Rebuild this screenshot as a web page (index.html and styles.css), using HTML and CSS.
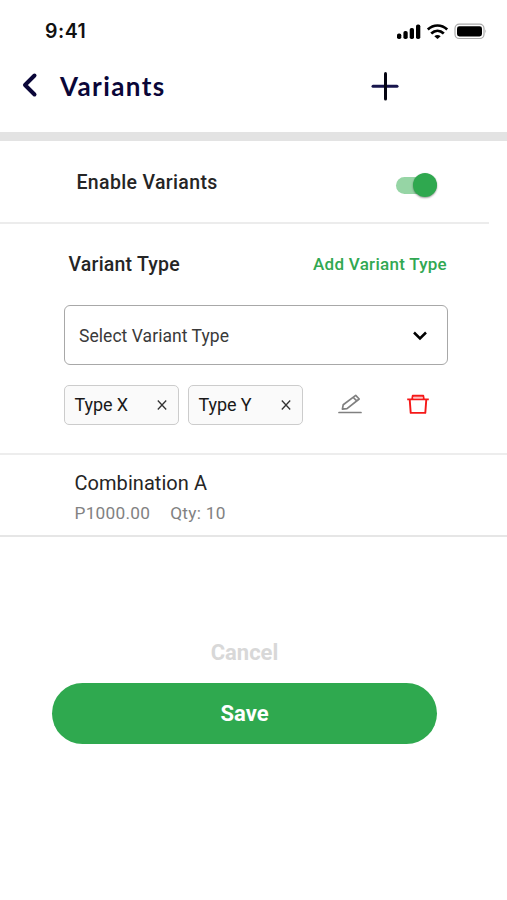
FILE: index.html
```html
<!DOCTYPE html>
<html lang="en">
<head>
<meta charset="utf-8">
<meta name="viewport" content="width=device-width, initial-scale=1">
<title>Variants</title>
<link rel="stylesheet" href="styles.css">
</head>
<body>
<div class="status-bar">
  <span class="time">9:41</span>
  <svg class="status-icons" width="91" height="18" viewBox="0 0 91 18" aria-hidden="true">
    <rect x="1" y="11.500" width="4.300" height="5.500" rx="1.800"/>
    <rect x="7.400" y="9" width="4.300" height="8" rx="1.800"/>
    <rect x="13.700" y="6" width="4.300" height="11" rx="1.800"/>
    <rect x="20" y="2.500" width="4.300" height="14.500" rx="1.800"/>
    <g fill="none" stroke="#000" stroke-width="2.700">
      <path d="M31.800 7.400C37.500 2.200 45.500 2.200 51.200 7.400"/>
      <path d="M35.200 11.500C39 7.900 44 7.900 47.800 11.500"/>
    </g>
    <path d="M38.300 14.200Q41.500 11.700 44.700 14.200L41.500 17Z"/>
    <rect x="59" y="2.200" width="29" height="14.300" rx="4.300" fill="#fff" stroke="#aaa" stroke-width="1.200"/>
    <rect x="61" y="4.200" width="25" height="10.300" rx="2.400"/>
    <path d="M89.500 7.200q1.500 2.100 0 4.200z" fill="#999"/>
  </svg>
</div>
<header class="header">
  <svg class="back" width="18" height="26" viewBox="0 0 18 26" aria-label="Back">
    <path d="M14.500 3.500L5 13l9.500 9.500" fill="none" stroke="#0a0638" stroke-width="4" stroke-linecap="round" stroke-linejoin="round"/>
  </svg>
  <h1 class="title">Variants</h1>
  <svg class="plus" width="30" height="30" viewBox="0 0 30 30" aria-label="Add">
    <path d="M3 15.200h24" stroke="#17154c" stroke-width="3" stroke-linecap="round"/>
    <path d="M15.500 2.500v25.500" stroke="#050512" stroke-width="3" stroke-linecap="round"/>
  </svg>
</header>
<main>
  <section class="enable">
    <span class="enable-label">Enable Variants</span>
    <span class="switch"><span class="knob"></span></span>
  </section>
  <section class="types">
    <div class="type-head">
      <span class="type-title">Variant Type</span>
      <span class="add">Add Variant Type</span>
    </div>
    <div class="select">
      <span class="select-label">Select Variant Type</span>
      <svg width="18" height="12" viewBox="0 0 18 12" aria-hidden="true"><path d="M3 3.500l6 6 6-6" fill="none" stroke="#000" stroke-width="2.500"/></svg>
    </div>
    <div class="chips">
      <div class="chip"><span>Type X</span><svg width="10" height="10" viewBox="0 0 10 10"><path d="M.8.500l8.400 9M9.200.500l-8.400 9"/></svg></div>
      <div class="chip"><span>Type Y</span><svg width="10" height="10" viewBox="0 0 10 10"><path d="M.8.500l8.400 9M9.200.500l-8.400 9"/></svg></div>
      <svg class="edit" width="24" height="22" viewBox="0 0 24 22" aria-label="Edit">
        <path d="M1 18.500h22M4.400 15.200l.8-4.400L17.700 1.400l3.500 3.600L9 14.700zM15.300 3.500l3.400 3.400" fill="none" stroke="#808080" stroke-width="1.700" stroke-linejoin="round" stroke-linecap="round"/>
      </svg>
      <svg class="trash" width="24" height="22" viewBox="0 0 24 22" aria-label="Delete">
        <path d="M1.200 5.400h21.600M3.700 5.400l1 13.500h14.600l1-13.500M6.200 5.200l.5-3.400h10.600l.5 3.400" fill="none" stroke="#f51818" stroke-width="1.900" stroke-linejoin="round"/>
        <path d="M7 3.700h10" stroke="#ffb0b0"/>
      </svg>
    </div>
  </section>
  <section class="combo">
    <div class="combo-name">Combination A</div>
    <div class="combo-meta"><span>P1000.00</span><span>Qty: 10</span></div>
  </section>
  <div class="actions">
    <button class="cancel">Cancel</button>
    <button class="save">Save</button>
  </div>
</main>
</body>
</html>
```
FILE: styles.css
```css
* { box-sizing: border-box; }
body {
  margin: 0;
  width: 507px;
  height: 900px;
  overflow: hidden;
  background: #fff;
  color: #252525;
  font-family: Roboto, sans-serif;
}
svg { display: block; flex: none; }
span, h1, .combo-name { white-space: nowrap; }
.status-bar {
  display: flex;
  justify-content: space-between;
  align-items: center;
  height: 62px;
  padding: 0 20px 0 45px;
}
.time { font: 600 19.5px/24px Inter, sans-serif; letter-spacing: .5px; color: #111; }
.header {
  display: flex;
  align-items: center;
  height: 79px;
  padding: 0 107px 30px 20px;
  border-bottom: 9px solid #e3e3e3;
}
.back { margin-top: 6px; }
.title {
  margin: 8px 0 0 22px;
  font: 700 26px/32px Lato, sans-serif;
  letter-spacing: 1.4px;
  color: #0a0638;
}
.plus { margin: 7px 0 0 auto; }
.enable {
  display: flex;
  justify-content: space-between;
  width: 489px;
  height: 83px;
  padding: 29px 52px 0 76.5px;
  border-bottom: 2px solid #ececec;
}
.enable-label { font-size: 19.5px; line-height: 26px; font-weight: 500; letter-spacing: .34px; }
.switch {
  display: flex;
  justify-content: flex-end;
  align-items: center;
  width: 41px;
  height: 17px;
  margin-top: 6.5px;
  border-radius: 9px;
  background: #96d5a5;
}
.knob {
  width: 24px;
  height: 24px;
  border-radius: 50%;
  background: #2fa84f;
  box-shadow: 0 1px 2px rgba(0, 0, 0, .4);
}
.types {
  height: 231px;
  padding: 28px 59px 0 64px;
  border-bottom: 2px solid #ededed;
}
.type-head {
  display: flex;
  justify-content: space-between;
  align-items: flex-start;
  height: 26px;
  padding: 0 1px 0 4.500px;
  line-height: 25px;
}
.type-title { font-size: 19.5px; font-weight: 500; letter-spacing: .2px; }
.add { font-size: 17px; font-weight: 500; letter-spacing: .27px; color: #31a852; }
.select {
  display: flex;
  justify-content: space-between;
  align-items: center;
  height: 60px;
  margin-top: 27px;
  padding: 0 18px 0 14px;
  border: 1.5px solid #a8a8a8;
  border-radius: 6px;
}
.select-label { padding-top: 2px; font-size: 17.5px; letter-spacing: .05px; color: #3a3a3a; }
.chips { display: flex; align-items: center; height: 40px; margin-top: 20px; }
.chip {
  display: flex;
  justify-content: space-between;
  align-items: center;
  width: 115px;
  height: 40px;
  margin-right: 9px;
  padding: 0 11.500px 0 9.500px;
  border: 1px solid #ccc;
  border-radius: 5px;
  background: #fafafa;
  font-size: 18px;
  letter-spacing: -.1px;
  color: #191919;
}
.chip span { padding-bottom: 2px; }
.chip path { fill: none; stroke: #333; stroke-width: 1.3; }
.edit { margin-left: 26px; }
.trash { margin-left: 44px; }
.combo {
  height: 82px;
  padding: 16px 0 0 74.5px;
  border-bottom: 2px solid #e6e6e6;
}
.combo-name { font-size: 20px; line-height: 24px; letter-spacing: .05px; }
.combo-meta {
  display: flex;
  gap: 20px;
  margin-top: 7px;
  font-size: 17.3px;
  letter-spacing: .25px;
  line-height: 22px;
  color: #828282;
}
.actions { width: 385px; margin: 100px 0 0 52px; }
button {
  display: block;
  width: 100%;
  padding: 0;
  border: 0;
  font-family: inherit;
  font-size: 22px;
  font-weight: 700;
}
.cancel { height: 30px; background: none; color: #d8d8d8; }
.save { height: 61px; margin-top: 16px; border-radius: 31px; background: #2fa94f; color: #fff; }
```
